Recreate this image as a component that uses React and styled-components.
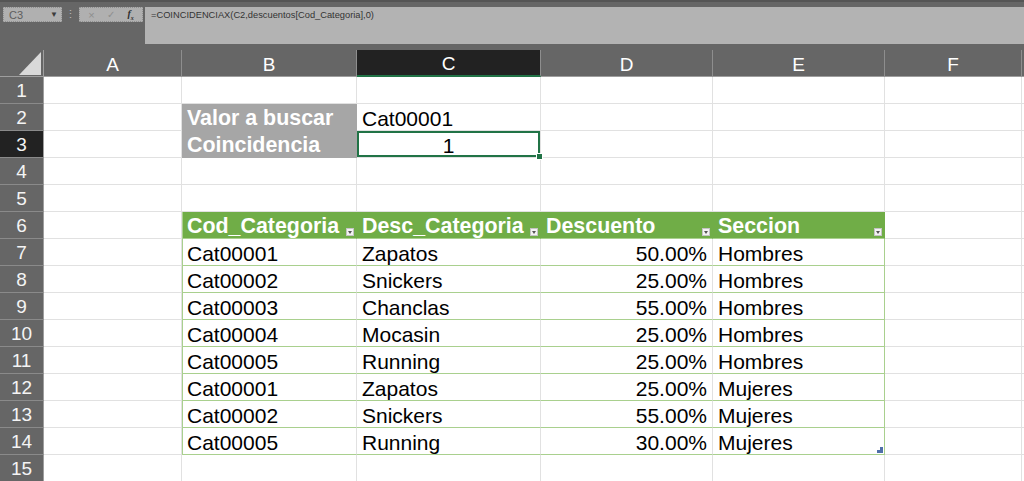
import React from 'react';
import styled, { createGlobalStyle } from 'styled-components';

const GlobalStyle = createGlobalStyle`
  html, body {
    margin: 0;
    padding: 0;
    background: #666666;
    overflow: hidden;
  }
`

const Window = styled.div`
  width: 1024px;
  height: 481px;
  overflow: hidden;
  background: #666666;
  font-family: 'Liberation Sans', Arial, sans-serif;`

const TopBar = styled.div`
  height: 50px;
  box-sizing: border-box;
  border-top: 2px solid #555555;
  padding-top: 5px;
  display: flex;
  align-items: flex-start;`

const NameBox = styled.div`
  width: 59px;
  height: 15px;
  margin-left: 3px;
  box-sizing: border-box;
  background: #b0b0b0;
  border: 1px dotted #8f8f8f;
  display: flex;
  align-items: center;
  justify-content: space-between;
  padding: 0 3px 0 5px;
  font-size: 11px;
  color: #5e5e5e;`

const Caret = styled.span`
  font-size: 8px;
  color: #3c3c3c;`

const Dots = styled.div`
  width: 17px;
  text-align: center;
  font-size: 11px;
  line-height: 15px;
  color: #b8b8b8;`

const FxBox = styled.div`
  width: 64px;
  height: 15px;
  box-sizing: border-box;
  background: #b0b0b0;
  border: 1px dotted #8f8f8f;
  display: flex;
  align-items: center;
  justify-content: space-around;
  padding: 0 2px;`

const FxGlyph = styled.span`
  font-size: ${p => p.$size || 10}px;
  font-style: ${p => p.$italic ? 'italic' : 'normal'};
  font-family: ${p => p.$italic ? "'Liberation Serif', serif" : 'inherit'};
  font-weight: ${p => p.$italic ? 'bold' : 'normal'};
  color: ${p => p.$dim ? '#8e8e8e' : '#2e2e2e'};`

const FormulaBar = styled.div`
  flex: 1;
  height: 37px;
  margin-left: 2px;
  background: #b3b3b3;
  box-sizing: border-box;
  padding: 3px 0 0 6px;
  font-size: 9.3px;
  color: #333333;`

const Sheet = styled.div`
  display: grid;
  grid-template-columns: 44px 138px 175px 184px 172px 172px 137px 1fr;
  grid-auto-rows: 27px;
  background: #ffffff;`

const ColHead = styled.div`
  background: ${p => p.$active ? '#222222' : '#666666'};
  color: #ffffff;
  font-size: 19px;
  display: flex;
  align-items: center;
  justify-content: center;
  padding-top: 3px;
  box-sizing: border-box;
  border-right: 1px solid #8e8e8e;
  border-bottom: ${p => p.$active ? '2px solid #217346' : '1px solid #9e9e9e'};`

const Corner = styled.div`
  background: #666666;
  border-right: 1px solid #9e9e9e;
  border-bottom: 1px solid #9e9e9e;
  box-sizing: border-box;
  display: flex;
  align-items: flex-end;
  justify-content: flex-end;
  padding: 0 2px 1px 0;`

const RowHead = styled.div`
  background: ${p => p.$active ? '#222222' : '#666666'};
  color: #f4f4f4;
  font-size: 19px;
  display: flex;
  align-items: center;
  justify-content: center;
  padding-top: 2px;
  box-sizing: border-box;
  border-right: 1px solid #9e9e9e;
  border-bottom: 1px solid #8a8a8a;`

const Cell = styled.div`
  position: relative;
  box-sizing: border-box;
  border-right: 1px solid ${p => p.$edge ? '#a9d08e' : '#e1e1e1'};
  border-bottom: 1px solid ${p => p.$line || '#e1e1e1'};
  box-shadow: ${p => p.$lead ? 'inset 1px 0 0 #a9d08e' : 'none'};
  background: ${p => p.$bg || '#ffffff'};
  color: ${p => p.$color || '#000000'};
  font-weight: ${p => p.$bold ? 'bold' : 'normal'};
  font-size: ${p => p.$bold ? '21.4px' : '21px'};
  line-height: 27px;
  padding: 1px 5px 0 5px;
  text-align: ${p => p.$align || 'left'};
  white-space: nowrap;
  overflow: visible;`

const Selected = styled(Cell)`
  box-shadow: inset 0 0 0 2px #217346;
  z-index: 2;`

const FillHandle = styled.span`
  position: absolute;
  right: -3px;
  bottom: -3px;
  width: 5px;
  height: 5px;
  background: #217346;
  border: 1px solid #ffffff;`

const FilterButton = styled.span`
  position: absolute;
  right: 2px;
  bottom: 2px;
  width: 8px;
  height: 8px;
  box-sizing: border-box;
  background: #f3f3f3;
  border: 1px solid #c4c4c4;
  display: flex;
  align-items: center;
  justify-content: center;`

const ResizeMark = styled.span`
  position: absolute;
  right: 1px;
  bottom: 1px;
  line-height: 0;`

const columns = ['A', 'B', 'C', 'D', 'E', 'F', '']

const fields = ['Cod_Categoria', 'Desc_Categoria', 'Descuento', 'Seccion']

const descuentos = [
  ['Cat00001', 'Zapatos', '50.00%', 'Hombres'],
  ['Cat00002', 'Snickers', '25.00%', 'Hombres'],
  ['Cat00003', 'Chanclas', '55.00%', 'Hombres'],
  ['Cat00004', 'Mocasin', '25.00%', 'Hombres'],
  ['Cat00005', 'Running', '25.00%', 'Hombres'],
  ['Cat00001', 'Zapatos', '25.00%', 'Mujeres'],
  ['Cat00002', 'Snickers', '55.00%', 'Mujeres'],
  ['Cat00005', 'Running', '30.00%', 'Mujeres'],
]

function FilterIcon() {
  return (
    <FilterButton>
      <svg width="4" height="3" viewBox="0 0 4 3">
        <polygon points="0,0 4,0 2,3" fill="#555" />
      </svg>
    </FilterButton>
  )
}

function renderCells(row) {
  // row 2 and 3: lookup inputs
  if (row === 2 || row === 3) {
    return columns.map((c, i) => {
      if (c === 'B') {
        return <Cell key={c} $bg="#a6a6a6" $color="#ffffff" $bold
          $line="#a6a6a6" style={{ borderRight: 'none' }}>
          {row === 2 ? 'Valor a buscar' : 'Coincidencia'}
        </Cell>
      }
      if (c === 'C' && row === 2) return <Cell key={c}>Cat00001</Cell>
      if (c === 'C' && row === 3) {
        return <Selected key={c} $align="center">1<FillHandle /></Selected>
      }
      return <Cell key={i} />
    })
  }

  // row 6: table header
  if (row === 6) {
    return columns.map((c, i) => {
      const f = i - 1
      if (f >= 0 && f < 4) {
        return <Cell key={i} $bg="#70ad47" $color="#ffffff" $bold
          $line="#a9d08e" $edge={f === 3} $lead={f === 0}
          style={{ borderRight: '1px solid #70ad47' }}>
          {fields[f]}
          <FilterIcon />
        </Cell>
      }
      return <Cell key={i} />
    })
  }

  // rows 7-14: table body
  if (row >= 7 && row <= 14) {
    const data = descuentos[row - 7]
    return columns.map((c, i) => {
      const f = i - 1
      if (f >= 0 && f < 4) {
        return <Cell key={i} $line="#a9d08e" $edge={f === 3} $lead={f === 0}
          $align={f === 2 ? 'right' : 'left'}>
          {data[f]}
          {row === 14 && f === 3 && (
            <ResizeMark>
              <svg width="6" height="6" viewBox="0 0 6 6">
                <polygon points="6,0 6,6 0,6 0,3 3,3 3,0" fill="#4f6fa8" />
              </svg>
            </ResizeMark>
          )}
        </Cell>
      }
      return <Cell key={i} />
    })
  }

  return columns.map((c, i) => <Cell key={i} />)
}

export default function App() {
  const rows = Array.from({ length: 15 }, (_, i) => i + 1)
  return (
    <Window>
      <GlobalStyle />
      <TopBar>
        <NameBox>C3<Caret>▼</Caret></NameBox>
        <Dots>⋮</Dots>
        <FxBox>
          <FxGlyph $dim $size={11}>×</FxGlyph>
          <FxGlyph $dim $size={10}>✓</FxGlyph>
          <FxGlyph $italic $size={10}>f<sub style={{ fontSize: 6 }}>x</sub></FxGlyph>
        </FxBox>
        <FormulaBar>=COINCIDENCIAX(C2,descuentos[Cod_Categoria],0)</FormulaBar>
      </TopBar>
      <Sheet>
        <Corner>
          <svg width="22" height="23" viewBox="0 0 22 23">
            <polygon points="22,0 22,23 0,23" fill="#d9d9d9" />
          </svg>
        </Corner>
        {columns.map((c, i) => (
          <ColHead key={i} $active={c === 'C'}>{c}</ColHead>
        ))}
        {rows.map(r => (
          <React.Fragment key={r}>
            <RowHead $active={r === 3}>{r}</RowHead>
            {renderCells(r)}
          </React.Fragment>
        ))}
      </Sheet>
    </Window>
  )
}
